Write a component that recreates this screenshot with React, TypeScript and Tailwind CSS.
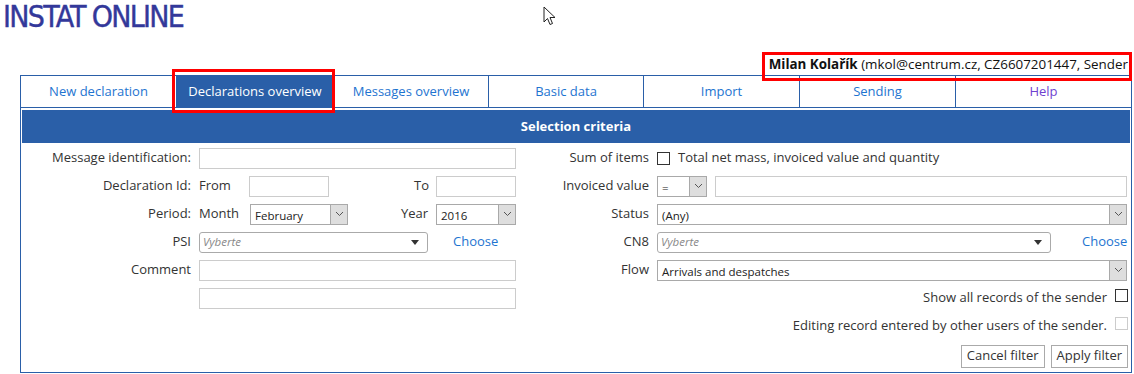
import React from 'react'

const font = { fontFamily: '"Open Sans", "Noto Sans", sans-serif' }

function Chevron() {
  return (
    <svg width="9" height="6" viewBox="0 0 9 6" className="block">
      <path d="M1 1 L4.5 4.5 L8 1" fill="none" stroke="#555" strokeWidth="1" />
    </svg>
  )
}

function Select({ value, className }: { value: string; className: string }) {
  return (
    <div className={`flex h-[21px] items-stretch border border-[#a9a9a9] bg-white ${className}`}>
      <span className="flex-1 overflow-hidden whitespace-nowrap pl-[4px] pt-[2px] text-[11.5px] text-[#222]">{value}</span>
      <span className="flex w-[17px] items-center justify-center border-l border-[#a9a9a9] bg-[#dedede]">
        <Chevron />
      </span>
    </div>
  )
}

function Chooser({ className }: { className: string }) {
  return (
    <div className={`flex h-[21px] items-center justify-between rounded-[3px] border border-[#aaa] bg-white pl-[3px] pr-[8px] ${className}`}>
      <span className="text-[11.5px] italic text-[#888]">Vyberte</span>
      <svg width="8" height="5" viewBox="0 0 8 5">
        <path d="M0 0 L8 0 L4 5 Z" fill="#333" />
      </svg>
    </div>
  )
}

function Input({ className }: { className: string }) {
  return <div className={`h-[21px] border border-[#ccc] bg-white ${className}`} />
}

function LeftRow({ label, children }: { label: string; children?: React.ReactNode }) {
  return (
    <div className="flex h-[28px] items-center">
      <span className="w-[171px] whitespace-nowrap pr-[1px] text-right">{label}</span>
      <div className="ml-[7px] flex items-center">{children}</div>
    </div>
  )
}

function RightRow({ label, children }: { label: string; children?: React.ReactNode }) {
  return (
    <div className="flex h-[28px] items-center">
      <span className="w-[98px] whitespace-nowrap text-right">{label}</span>
      <div className="ml-[8px] flex flex-1 items-center">{children}</div>
    </div>
  )
}

const tabs = [
  { label: 'New declaration', w: 'w-[155px]' },
  { label: 'Declarations overview', w: 'w-[157px]', active: true },
  { label: 'Messages overview', w: 'w-[155px]' },
  { label: 'Basic data', w: 'w-[155px]' },
  { label: 'Import', w: 'w-[156px]' },
  { label: 'Sending', w: 'w-[156px]' },
  { label: 'Help', w: 'flex-1', visited: true },
]

export default function App() {
  return (
    <div className="relative h-[374px] w-[1134px] overflow-hidden bg-white text-[13px] text-[#333]" style={font}>
      {/* header */}
      <div
        className="pl-[3px] text-[30px] leading-[34px] tracking-[-1.7px] text-[#33389a] [-webkit-text-stroke:0.4px_#33389a]"
        style={{ fontFamily: '"Liberation Sans Narrow", "DejaVu Sans Condensed", "Roboto", sans-serif' }}
      >
        INSTAT ONLINE
      </div>
      <div className="mt-[19px] flex h-[22px] justify-end overflow-hidden whitespace-nowrap pr-[6px] text-[13.4px] leading-[22px] text-[#111]">
        <span>
          <b>Milan Kolařík</b> (mkol@centrum.cz, CZ6607201447, Sender
        </span>
      </div>

      {/* panel */}
      <div className="ml-[20px] w-[1112px] border border-[#2a5fa8]">
        <div className="flex h-[32px] border-b border-[#2a5fa8]">
          {tabs.map((t, i) => (
            <div
              key={t.label}
              className={`flex items-center justify-center ${t.w} ${i > 0 ? 'border-l border-[#2a5fa8]' : ''} ${
                t.active ? 'bg-[#2a5fa8] text-white' : t.visited ? 'text-[#6f3fd0]' : 'text-[#1e74d0]'
              }`}
            >
              {t.label}
            </div>
          ))}
        </div>
        <div className="p-[1px] pt-[2px]">
          <div className="flex h-[33px] items-center justify-center bg-[#2a5fa8] font-bold text-white">Selection criteria</div>
        </div>

        <div className="flex">
          {/* left column */}
          <div className="w-[530px]">
            <LeftRow label="Message identification:">
              <Input className="w-[317px]" />
            </LeftRow>
            <LeftRow label="Declaration Id:">
              <span className="w-[43px] text-left">From</span>
              <Input className="ml-[7px] w-[80px]" />
              <span className="w-[107px] pr-[7px] text-right">To</span>
              <Input className="w-[80px]" />
            </LeftRow>
            <LeftRow label="Period:">
              <span className="w-[43px] text-left">Month</span>
              <Select value="February" className="ml-[8px] w-[98px]" />
              <span className="w-[88px] pr-[8px] text-right">Year</span>
              <Select value="2016" className="w-[80px]" />
            </LeftRow>
            <LeftRow label="PSI">
              <Chooser className="w-[229px]" />
              <span className="ml-[25px] text-[#1e74d0]">Choose</span>
            </LeftRow>
            <LeftRow label="Comment">
              <Input className="w-[317px]" />
            </LeftRow>
            <LeftRow label="">
              <Input className="w-[317px]" />
            </LeftRow>
          </div>

          {/* right column */}
          <div className="flex-1">
            <RightRow label="Sum of items">
              <span className="h-[13px] w-[13px] border border-[#333] bg-white" />
              <span className="ml-[8px]">Total net mass, invoiced value and quantity</span>
            </RightRow>
            <RightRow label="Invoiced value">
              <Select value="=" className="w-[50px]" />
              <Input className="ml-[8px] w-[412px]" />
            </RightRow>
            <RightRow label="Status">
              <Select value="(Any)" className="w-[470px]" />
            </RightRow>
            <RightRow label="CN8">
              <Chooser className="w-[394px]" />
              <span className="ml-[31px] text-[#1e74d0]">Choose</span>
            </RightRow>
            <RightRow label="Flow">
              <Select value="Arrivals and despatches" className="w-[470px]" />
            </RightRow>
            <div className="flex h-[28px] items-center justify-end pr-[3px]">
              <span>Show all records of the sender</span>
              <span className="mb-[6px] ml-[8px] h-[13px] w-[13px] border border-[#333] bg-white" />
            </div>
            <div className="flex h-[28px] items-center justify-end pr-[3px]">
              <span>Editing record entered by other users of the sender.</span>
              <span className="mb-[6px] ml-[8px] h-[13px] w-[13px] border border-[#ccc] bg-white" />
            </div>
            <div className="flex h-[32px] items-center justify-end gap-[6px] pr-[3px]">
              <button className="h-[23px] border border-[#aaa] bg-white px-[5px] text-[13px] text-[#333]">Cancel filter</button>
              <button className="h-[23px] border border-[#aaa] bg-white px-[5px] text-[13px] text-[#333]">Apply filter</button>
            </div>
          </div>
        </div>
      </div>

      {/* annotation boxes */}
      <div className="absolute left-[762px] top-[52px] h-[29px] w-[370px] border-[3px] border-[#f00]" />
      <div className="absolute left-[172px] top-[69px] h-[44px] w-[163px] border-[3px] border-[#f00]" />

      {/* mouse cursor */}
      <svg className="absolute left-[543px] top-[6px]" width="14" height="21" viewBox="0 0 14 21">
        <path d="M1 1 L1 16 L4.5 12.5 L7 18.5 L9.5 17.5 L7 11.5 L12 11.5 Z" fill="#fff" stroke="#222" strokeWidth="1" strokeLinejoin="round" />
      </svg>
    </div>
  )
}
